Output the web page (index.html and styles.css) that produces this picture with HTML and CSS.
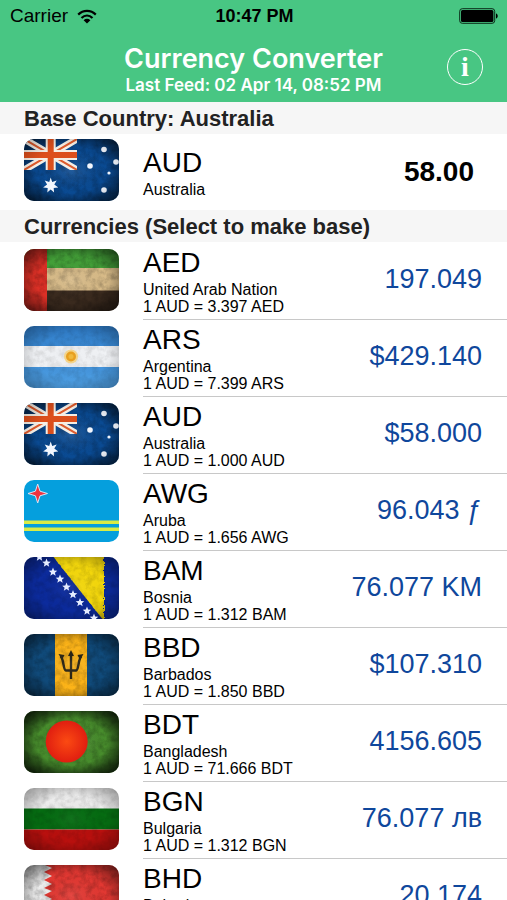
FILE: index.html
```html
<!DOCTYPE html>
<html lang="en">
<head>
<meta charset="utf-8">
<meta name="viewport" content="width=device-width, initial-scale=1">
<title>Currency Converter</title>
<link rel="stylesheet" href="styles.css">
</head>
<body>
<svg class="defs" width="0" height="0" aria-hidden="true">
  <defs>
    <filter id="grain" x="0" y="0" width="100%" height="100%">
      <feTurbulence type="fractalNoise" baseFrequency="0.16" numOctaves="4" seed="4"/>
      <feColorMatrix values="0 0 0 0 0  0 0 0 0 0  0 0 0 0 0  1.4 0 0 0 -0.5"/>
    </filter>
    <filter id="rough" x="-5%" y="-5%" width="110%" height="110%">
      <feTurbulence type="fractalNoise" baseFrequency="0.4" numOctaves="2" seed="3"/>
      <feDisplacementMap in="SourceGraphic" scale="5"/>
    </filter>
    <radialGradient id="vignette" cx="50%" cy="50%" r="68%">
      <stop offset="0" stop-color="#fff" stop-opacity=".08"/>
      <stop offset=".55" stop-color="#000" stop-opacity="0"/>
      <stop offset="1" stop-color="#000" stop-opacity=".6"/>
    </radialGradient>
    <radialGradient id="sun-red"><stop offset="0" stop-color="#fb4a12"/><stop offset="1" stop-color="#e01e10"/></radialGradient>
    <linearGradient id="sky" x1="0" y1="0" x2="0" y2="1"><stop offset="0" stop-color="#2f7cc8"/><stop offset="1" stop-color="#4fa0e4"/></linearGradient>
    <g id="worn">
      <rect width="95" height="62" filter="url(#grain)" opacity=".3"/>
      <rect width="95" height="62" fill="url(#vignette)"/>
    </g>
    <polygon id="star7" points="0,-8 1.5,-3.6 6,-5 3.6,-1 7.6,2 3,2.4 3.4,7 0,4 -3.4,7 -3,2.4 -7.6,2 -3.6,-1 -6,-5 -1.5,-3.6"/>
    <polygon id="star5" points="0,-4.4 1.2,-1.4 4.3,-1.3 1.9,.7 2.7,3.7 0,2 -2.7,3.7 -1.9,.7 -4.3,-1.3 -1.2,-1.4"/>
    <symbol id="flag-au" viewBox="0 0 95 62">
      <rect width="95" height="62" fill="#0a4a92"/>
      <use href="#worn"/>
      <svg width="53" height="31" viewBox="0 0 53 31">
        <path d="M0 0 53 31M53 0 0 31" stroke="#f6efe6" stroke-width="7"/>
        <path d="M0 0 53 31M53 0 0 31" stroke="#dd5a2c" stroke-width="2"/>
        <path d="M26.700 0V31M0 16H53" stroke="#f6efe6" stroke-width="10"/>
        <path d="M26.700 0V31M0 16H53" stroke="#dd4f1c" stroke-width="6"/>
      </svg>
      <g fill="#f4f8ff">
        <use href="#star7" x="26.700" y="46.500"/>
        <circle cx="66" cy="27" r="2.800"/><circle cx="80" cy="10.500" r="2.800"/><circle cx="92" cy="23" r="2.800"/><circle cx="85" cy="34" r="1.600"/><circle cx="80" cy="51" r="2.800"/>
      </g>
      <rect width="95" height="62" fill="url(#vignette)" opacity=".4"/>
    </symbol>
    <symbol id="flag-ae" viewBox="0 0 95 62">
      <rect width="95" height="20" fill="#439f38"/><rect y="19" width="95" height="23" fill="#d8bb88"/><rect y="41.500" width="95" height="21" fill="#3a2a1e"/><rect width="23" height="62" fill="#dc3026"/>
      <use href="#worn"/>
    </symbol>
    <symbol id="flag-ar" viewBox="0 0 95 62">
      <rect width="95" height="62" fill="url(#sky)"/><rect y="20" width="95" height="21" fill="#f0f2f5"/>
      <use href="#worn" opacity=".5"/>
      <circle cx="47" cy="30.500" r="7" fill="#f3d48c"/><circle cx="47" cy="30.500" r="5" fill="#e8a020"/><circle cx="47" cy="30.500" r="2.500" fill="#efb83c"/>
    </symbol>
    <symbol id="flag-aw" viewBox="0 0 95 62">
      <rect width="95" height="62" fill="#059fdd"/><path d="M0 42.300H95M0 49.300H95" stroke="#d9ec45" stroke-width="3.400"/>
      <path d="M13.700 4 16 11.200 23.500 13.500 16 15.800 13.700 23 11.400 15.800 4 13.500 11.400 11.200Z" fill="#ef3340" stroke="#d8e4f4" stroke-width="1"/>
    </symbol>
    <symbol id="flag-ba" viewBox="0 0 95 62">
      <rect width="95" height="62" fill="#0c2b9c"/><path d="M27-3H80V64Z" fill="#f4d80e" filter="url(#rough)"/>
      <use href="#worn" opacity=".7"/>
      <g fill="#e4ecff"><use href="#star5" x="15.500" y="0"/><use href="#star5" x="22.500" y="6"/><use href="#star5" x="29" y="15"/><use href="#star5" x="36" y="22"/><use href="#star5" x="42.500" y="30"/><use href="#star5" x="49" y="37.500"/><use href="#star5" x="56" y="45.500"/><use href="#star5" x="63" y="54"/><use href="#star5" x="70" y="61"/></g>
    </symbol>
    <symbol id="flag-bb" viewBox="0 0 95 62">
      <rect width="95" height="62" fill="#104a7a"/><rect x="31" width="32" height="62" fill="#fdb418"/>
      <path d="M47 20V45M36.500 22C40 25 39 36 42 36.500H52C55 36 54 25 57.500 22" fill="none" stroke="#2a2413" stroke-width="2.400"/>
      <path d="M47 16 50 22H44ZM34.500 20 40.500 21 38 26ZM59.500 20 53.500 21 56 26Z" fill="#2a2413"/>
      <use href="#worn"/>
    </symbol>
    <symbol id="flag-bd" viewBox="0 0 95 62">
      <rect width="95" height="62" fill="#478c2c"/><use href="#worn"/><rect width="95" height="62" fill="url(#vignette)"/><circle cx="42.700" cy="30.500" r="21" fill="url(#sun-red)"/>
    </symbol>
    <symbol id="flag-bg" viewBox="0 0 95 62">
      <rect width="95" height="21" fill="#ececec"/><rect y="20.500" width="95" height="21" fill="#066c12"/><rect y="41.500" width="95" height="21" fill="#b8100e"/>
      <use href="#worn" opacity=".6"/>
    </symbol>
    <symbol id="flag-bh" viewBox="0 0 95 62">
      <rect width="95" height="62" fill="#ececec"/>
      <path d="M95 0H21L28 3 20 7 28 11 20 15 28 19 20 23 28 26 20 30 28 34 20 38 28 42 20 46 28 50 20 54 28 58 20 62H95Z" fill="#e23832"/>
      <use href="#worn"/>
    </symbol>
  </defs>
</svg>

<header class="top">
  <div class="status">
    <div class="status-left"><span>Carrier</span>
      <svg class="wifi" viewBox="0 0 20 15" aria-hidden="true"><path d="M1.200 5.600C6.200.6 13.800.6 18.800 5.600M4.500 9C7.800 5.800 12.200 5.800 15.500 9" fill="none" stroke="#000" stroke-width="2.200"/><path d="M10 14.500 6.600 11.200C8.600 9.400 11.400 9.400 13.400 11.200Z"/></svg>
    </div>
    <time class="clock">10:47 PM</time>
    <svg class="battery" viewBox="0 0 40 16" aria-hidden="true"><rect x=".7" y=".7" width="35" height="14.600" rx="2.600" fill="none" stroke="#0b2a18" stroke-width="1"/><rect x="2" y="2" width="32.400" height="12" rx="1.500"/><path d="M37 5.500C39.300 6 39.300 10 37 10.500Z"/></svg>
  </div>
  <div class="nav">
    <div class="titles"><h1>Currency Converter</h1><p>Last Feed: 02 Apr 14, 08:52 PM</p></div>
    <button class="info" type="button" aria-label="Information">i</button>
  </div>
</header>

<main>
  <section>
    <h2><label for="amount">Base Country: Australia</label></h2>
    <div class="row base">
      <svg class="flag"><use href="#flag-au"/></svg>
      <span class="body"><span class="text"><span class="code">AUD</span><span class="line">Australia</span></span>
      <input class="amount" id="amount" type="text" inputmode="decimal" value="58.00"></span>
    </div>
  </section>
  <section>
    <h2>Currencies (Select to make base)</h2>
    <ul class="list">
      <li><button class="row" type="button"><svg class="flag"><use href="#flag-ae"/></svg><span class="body"><span class="text"><span class="code">AED</span><span class="line">United Arab Nation</span><span class="line">1 AUD = 3.397 AED</span></span><span class="value">197.049</span></span></button></li>
      <li><button class="row" type="button"><svg class="flag"><use href="#flag-ar"/></svg><span class="body"><span class="text"><span class="code">ARS</span><span class="line">Argentina</span><span class="line">1 AUD = 7.399 ARS</span></span><span class="value">$429.140</span></span></button></li>
      <li><button class="row" type="button"><svg class="flag"><use href="#flag-au"/></svg><span class="body"><span class="text"><span class="code">AUD</span><span class="line">Australia</span><span class="line">1 AUD = 1.000 AUD</span></span><span class="value">$58.000</span></span></button></li>
      <li><button class="row" type="button"><svg class="flag"><use href="#flag-aw"/></svg><span class="body"><span class="text"><span class="code">AWG</span><span class="line">Aruba</span><span class="line">1 AUD = 1.656 AWG</span></span><span class="value">96.043 ƒ</span></span></button></li>
      <li><button class="row" type="button"><svg class="flag"><use href="#flag-ba"/></svg><span class="body"><span class="text"><span class="code">BAM</span><span class="line">Bosnia</span><span class="line">1 AUD = 1.312 BAM</span></span><span class="value">76.077 KM</span></span></button></li>
      <li><button class="row" type="button"><svg class="flag"><use href="#flag-bb"/></svg><span class="body"><span class="text"><span class="code">BBD</span><span class="line">Barbados</span><span class="line">1 AUD = 1.850 BBD</span></span><span class="value">$107.310</span></span></button></li>
      <li><button class="row" type="button"><svg class="flag"><use href="#flag-bd"/></svg><span class="body"><span class="text"><span class="code">BDT</span><span class="line">Bangladesh</span><span class="line">1 AUD = 71.666 BDT</span></span><span class="value">4156.605</span></span></button></li>
      <li><button class="row" type="button"><svg class="flag"><use href="#flag-bg"/></svg><span class="body"><span class="text"><span class="code">BGN</span><span class="line">Bulgaria</span><span class="line">1 AUD = 1.312 BGN</span></span><span class="value">76.077 лв</span></span></button></li>
      <li><button class="row" type="button"><svg class="flag"><use href="#flag-bh"/></svg><span class="body"><span class="text"><span class="code">BHD</span><span class="line">Bahrain</span><span class="line">1 AUD = 0.348 BHD</span></span><span class="value">20.174</span></span></button></li>
    </ul>
  </section>
</main>
</body>
</html>
```
FILE: styles.css
```css
* { box-sizing: border-box; }

html, body { height: 100%; }

body {
  margin: 0;
  display: flex;
  flex-direction: column;
  overflow: hidden;
  background: #fff;
  color: #000;
  font-family: "Liberation Sans", Arial, sans-serif;
}

h1, h2, p, ul { margin: 0; padding: 0; }

button, input { font: inherit; color: inherit; border: 0; background: none; padding: 0; }

.defs { position: absolute; }

.top { flex: none; background: #48c683; }

.status {
  display: grid;
  grid-template-columns: 1fr auto 1fr;
  align-items: center;
  height: 32px;
  padding: 0 8px 0 10px;
  font-size: 19px;
}

.status-left { display: flex; align-items: center; gap: 9px; }
.wifi { width: 20px; height: 15px; }
.clock { font-size: 18px; font-weight: bold; }
.battery { width: 40px; height: 16px; justify-self: end; }

.nav {
  display: grid;
  grid-template-columns: 1fr auto 1fr;
  align-items: center;
  height: 70px;
  padding: 0 24px;
  color: #fff;
}

.titles { grid-column: 2; padding-top: 3px; text-align: center; font-family: Inter, sans-serif; }
.titles h1 { font-size: 27px; line-height: 32px; font-weight: 600; }
.titles p { font-size: 17px; line-height: 20px; font-weight: 600; }

.info {
  justify-self: end;
  width: 36px;
  height: 36px;
  border: 1px solid #fff;
  border-radius: 50%;
  font: bold 28px/30px "Liberation Serif", serif;
}

main { flex: 1; min-height: 0; overflow: hidden; }

h2 {
  height: 32px;
  padding-left: 24px;
  background: #f6f6f6;
  color: #222;
  font-size: 22px;
  line-height: 33px;
  font-weight: bold;
}

.list { list-style: none; padding-top: 1px; }

.row {
  display: flex;
  align-items: center;
  width: 100%;
  height: 77px;
  padding-left: 24px;
  gap: 24px;
  text-align: left;
}

.flag { flex: none; width: 95px; height: 62px; margin-bottom: 4px; border-radius: 10px; }

.body {
  flex: 1;
  align-self: stretch;
  display: flex;
  align-items: center;
  justify-content: space-between;
  padding-right: 25px;
}

.list .body { border-bottom: 1px solid #c8c8c8; }

.text { display: flex; flex-direction: column; }
.code { font-size: 28px; line-height: 32px; margin-bottom: 2px; }
.line { font-size: 16px; line-height: 17px; }
.value { padding-bottom: 4px; font-size: 27px; color: #0f479c; }

.base { height: 76px; }
.base .body { padding-right: 33px; }
.amount { width: 120px; font-size: 28px; font-weight: bold; text-align: right; }
```
